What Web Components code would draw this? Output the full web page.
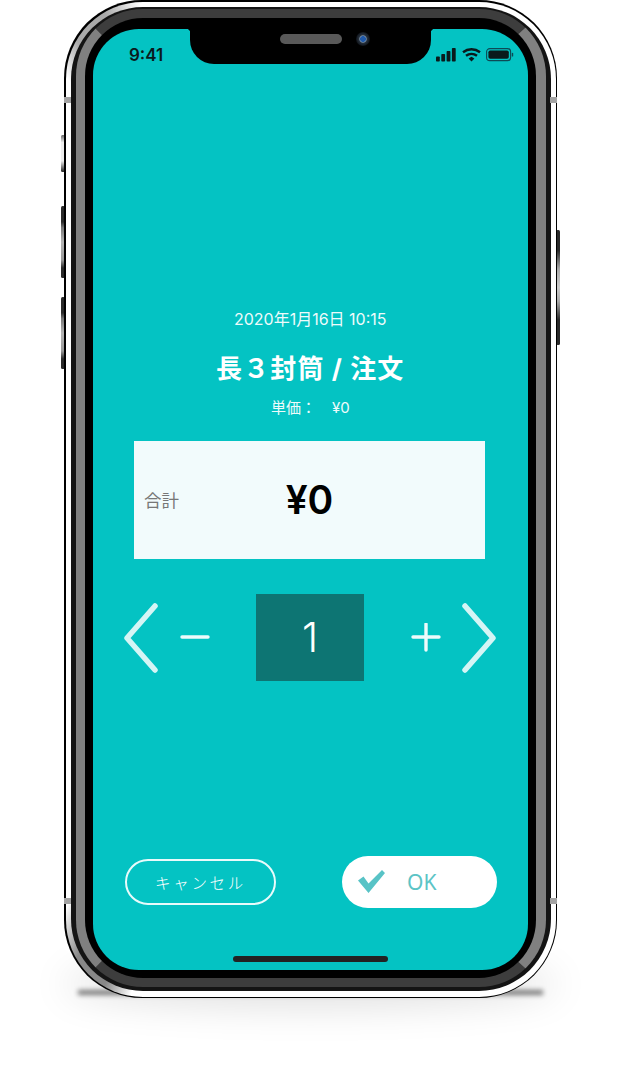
<!DOCTYPE html>
<html lang="ja">
<head>
<meta charset="utf-8">
<title>注文</title>
<style>
  html, body { margin: 0; height: 100%; background: #fff; overflow: hidden; }
</style>
</head>
<body>
<phone-frame>
  <status-bar></status-bar>
  <order-header date="2020年1月16日 10:15" title="長３封筒 / 注文" price="¥0"></order-header>
  <total-panel label="合計" amount="¥0"></total-panel>
  <qty-stepper value="1"></qty-stepper>
  <action-bar></action-bar>
</phone-frame>

<script>
const FONT = `Inter, "Noto Sans CJK JP", "Liberation Sans", sans-serif`;

class PhoneFrame extends HTMLElement {
  constructor() {
    super();
    this.attachShadow({ mode: "open" });
    this.shadowRoot.innerHTML = `
      <style>
        :host { display: block; width: 493px; height: 998px; margin-left: 64px; position: relative; font-family: ${FONT}; }
        .shadow { position: absolute; left: 0; right: 0; bottom: 30px; height: 40px; border-radius: 50%; box-shadow: 0 36px 38px 2px rgba(0,0,0,.13); }
        .contact { position: absolute; left: 14px; right: 14px; bottom: 3px; height: 5px; background: #000; opacity: .5; filter: blur(2.5px); }
        .rim { position: relative; box-sizing: border-box; height: 100%; background: #000; border-radius: 78px; padding: 1.5px; }
        /* the white edge goes dull where it turns the left corners */
        .white { box-sizing: border-box; height: 100%; border-radius: 77px; padding: 5px 5px 6px;
          background: conic-gradient(#fff 0 200deg, #888 203deg 207deg, #fff 211deg 330deg, #aaa 333deg 337deg, #fff 341deg); }
        .dark { box-sizing: border-box; height: 100%; background: #141414; border-radius: 72px; padding: 2.5px 5px 4px 5.5px; }
        .band { box-sizing: border-box; height: 100%; border-radius: 67px; border-style: solid; border-width: 9px 10px 9px 9px; border-color: #3d3d3d #808080 #3d3d3d #808080; background: #000; }
        .bezel { box-sizing: border-box; height: 100%; padding: 11px 8px 8px; }
        .screen { position: relative; box-sizing: border-box; height: 100%; background: #04c3c3; border-radius: 46px; overflow: hidden; display: flex; flex-direction: column; }
        .notch { position: absolute; left: 97px; top: 0; width: 241px; height: 35px; background: #000; border-radius: 0 0 24px 24px; }
        .notch::before, .notch::after { content: ""; position: absolute; top: 0; width: 4px; height: 4px; background: radial-gradient(circle at 0 100%, transparent 4px, #000 4.5px); }
        .notch::before { left: -4px; }
        .notch::after { right: -4px; transform: scaleX(-1); }
        .speaker { position: absolute; left: 90px; top: 5px; width: 62px; height: 10px; border-radius: 5px; background: #595959; }
        .camera { position: absolute; left: 166px; top: 3px; width: 14px; height: 14px; border-radius: 50%; background: radial-gradient(circle, #1f58a8 0 2.6px, #7d92a8 3.2px, #26303c 4.2px, #0e1218 7px); }
        .home { position: absolute; left: 140px; bottom: 8px; width: 155px; height: 6px; border-radius: 3px; background: #222; }
        .side { position: absolute; width: 4px; border-radius: 1.5px; background: linear-gradient(#2a2a2a 0 22%, #777 30%, #b5b5b5 50%, #999 75%, #2a2a2a 86%); }
        .side.silent { background: linear-gradient(#666, #eee 20%, #eee 70%, #222); }
        .side.power { background: linear-gradient(#2a2a2a 0 18%, #aaa 34%, #ccc 50%, #aaa 62%, #2a2a2a 78%); }
        .antenna { position: absolute; width: 7px; height: 6px; background: #a3a3a3; }
      </style>
      <div class="shadow"></div>
      <div class="contact"></div>
      <div class="side silent" style="left:-3px;top:135px;height:37px"></div>
      <div class="side" style="left:-3px;top:206px;height:72px"></div>
      <div class="side" style="left:-3px;top:297px;height:72px"></div>
      <div class="side power" style="right:-3px;top:230px;height:115px"></div>
      <div class="rim"><div class="white"><div class="dark"><div class="band"><div class="bezel">
        <div class="screen">
          <slot></slot>
          <div class="notch"><div class="speaker"></div><div class="camera"></div></div>
          <div class="home"></div>
        </div>
      </div></div></div></div></div>
      <div class="antenna" style="left:0;top:97px"></div>
      <div class="antenna" style="right:0;top:97px"></div>
      <div class="antenna" style="left:0;top:898px"></div>
      <div class="antenna" style="right:0;top:898px"></div>
    `;
  }
}

class StatusBar extends HTMLElement {
  constructor() {
    super();
    this.attachShadow({ mode: "open" });
    this.shadowRoot.innerHTML = `
      <style>
        :host { display: flex; justify-content: space-between; align-items: center; height: 20px; margin-top: 16px; padding: 0 0 0 36px; color: #0a1a1c; }
        time { font: 600 17px/20px Inter, "Liberation Sans", sans-serif; }
        svg { display: block; }
      </style>
      <time>9:41</time>
      <svg width="92" height="16" viewBox="0 0 92 16">
        <g fill="#0a1a1c">
          <rect x="0" y="9.5" width="3.8" height="5" rx=".8"/>
          <rect x="5.3" y="7" width="3.8" height="7.5" rx=".8"/>
          <rect x="10.6" y="4" width="3.8" height="10.5" rx=".8"/>
          <rect x="15.9" y="1" width="3.8" height="13.5" rx=".8"/>
        </g>
        <g fill="none" stroke="#0a1a1c" stroke-width="2.4">
          <path d="M27 5.2a14 14 0 0 1 17 0"/>
          <path d="M30 8.8a9 9 0 0 1 11 0"/>
        </g>
        <path d="M32.6 11.4l2.9-1.6 2.9 1.6-2.9 3.2z" fill="#0a1a1c"/>
        <rect x="50.6" y="1.6" width="24" height="12" rx="3.2" fill="none" stroke="#0d4a55" stroke-width="1.1"/>
        <rect x="52.4" y="3.4" width="20.4" height="8.4" rx="1.8" fill="#0a1a1c"/>
        <rect x="75.8" y="5.8" width="1.4" height="3.8" rx=".7" fill="#0d4a55"/>
      </svg>
    `;
  }
}

class OrderHeader extends HTMLElement {
  constructor() {
    super();
    this.attachShadow({ mode: "open" });
  }

  connectedCallback() {
    this.shadowRoot.innerHTML = `
      <style>
        :host { display: block; margin-top: 243.5px; text-align: center; color: #fff; }
        .date { font-size: 16px; line-height: 20px; color: #eefbfb; }
        h1 { margin: 21px 0 0; font-size: 26px; line-height: 38px; font-weight: 700; letter-spacing: 1.1px; }
        .price { margin-top: 10.5px; font-size: 15px; line-height: 20px; color: #eefbfb; }
        .price span { margin-left: 16px; }
      </style>
      <div class="date">${this.getAttribute("date")}</div>
      <h1>${this.getAttribute("title")}</h1>
      <div class="price">単価：<span>${this.getAttribute("price")}</span></div>
    `;
  }
}

class TotalPanel extends HTMLElement {
  constructor() {
    super();
    this.attachShadow({ mode: "open" });
  }

  connectedCallback() {
    this.shadowRoot.innerHTML = `
      <style>
        :host { display: grid; grid-template-columns: 1fr; align-items: center; justify-items: center; box-sizing: border-box; width: 351px; height: 117.5px; margin: 23px 0 0 41px; background: #f2fbfc; position: relative; }
        .label { position: absolute; left: 10px; font-size: 17.5px; color: #777; }
        .amount { font: 600 39px/1 Inter, "Liberation Sans", sans-serif; color: #000; }
      </style>
      <span class="label">${this.getAttribute("label")}</span>
      <span class="amount">${this.getAttribute("amount")}</span>
    `;
  }
}

class QtyStepper extends HTMLElement {
  constructor() {
    super();
    this.attachShadow({ mode: "open" });
  }

  connectedCallback() {
    this.shadowRoot.innerHTML = `
      <style>
        :host { display: flex; align-items: center; height: 87px; margin: 35.5px 0 0 31px; }
        svg { display: block; flex: none; }
        .value { flex: none; width: 108px; height: 87px; display: flex; align-items: center; justify-content: center; background: #0d7573; color: #fff; font: 300 41px/1 Inter, "Liberation Sans", sans-serif; }
      </style>
      <svg width="34" height="70" viewBox="0 0 34 70"><path d="M31 3 3 35l28 32" fill="none" stroke="#d5f5f5" stroke-width="5.5" stroke-linecap="round" stroke-linejoin="round"/></svg>
      <svg width="30" height="30" viewBox="0 0 30 30" style="margin-left:22px"><path d="M2 14h26" stroke="#eefbfb" stroke-width="3.4" stroke-linecap="round"/></svg>
      <div class="value" style="margin-left:46px">${this.getAttribute("value")}</div>
      <svg width="30" height="30" viewBox="0 0 30 30" style="margin-left:47px"><path d="M2 14h26M15 1v26" stroke="#eefbfb" stroke-width="3.4" stroke-linecap="round"/></svg>
      <svg width="34" height="70" viewBox="0 0 34 70" style="margin-left:21px"><path d="M3 3l28 32-28 32" fill="none" stroke="#d5f5f5" stroke-width="5.5" stroke-linecap="round" stroke-linejoin="round"/></svg>
    `;
  }
}

class ActionBar extends HTMLElement {
  constructor() {
    super();
    this.attachShadow({ mode: "open" });
    this.shadowRoot.innerHTML = `
      <style>
        :host { display: flex; align-items: center; margin: 175px 0 0 32px; height: 52px; }
        .cancel { box-sizing: border-box; width: 151px; height: 46px; border: 2px solid #e8fbfb; border-radius: 23px; display: flex; align-items: center; justify-content: center; color: #fff; font-size: 15.5px; font-weight: 300; letter-spacing: 2.7px; }
        .ok { box-sizing: border-box; width: 155px; height: 52px; margin-left: 66px; padding-left: 15px; border-radius: 26px; background: #fff; display: flex; align-items: center; color: #5cc4c6; font: 400 21px/1 "Noto Sans", "Liberation Sans", sans-serif; }
        .ok svg { display: block; margin-right: 22px; }
      </style>
      <div class="cancel">キャンセル</div>
      <div class="ok">
        <svg width="28" height="24" viewBox="0 0 28 24"><path d="M1 10.5 6.5 6.5 11.5 13.5 25 0 28 3 11.5 23z" fill="#58c3c6"/></svg>
        OK
      </div>
    `;
  }
}

customElements.define("phone-frame", PhoneFrame);
customElements.define("status-bar", StatusBar);
customElements.define("order-header", OrderHeader);
customElements.define("total-panel", TotalPanel);
customElements.define("qty-stepper", QtyStepper);
customElements.define("action-bar", ActionBar);
</script>
</body>
</html>
